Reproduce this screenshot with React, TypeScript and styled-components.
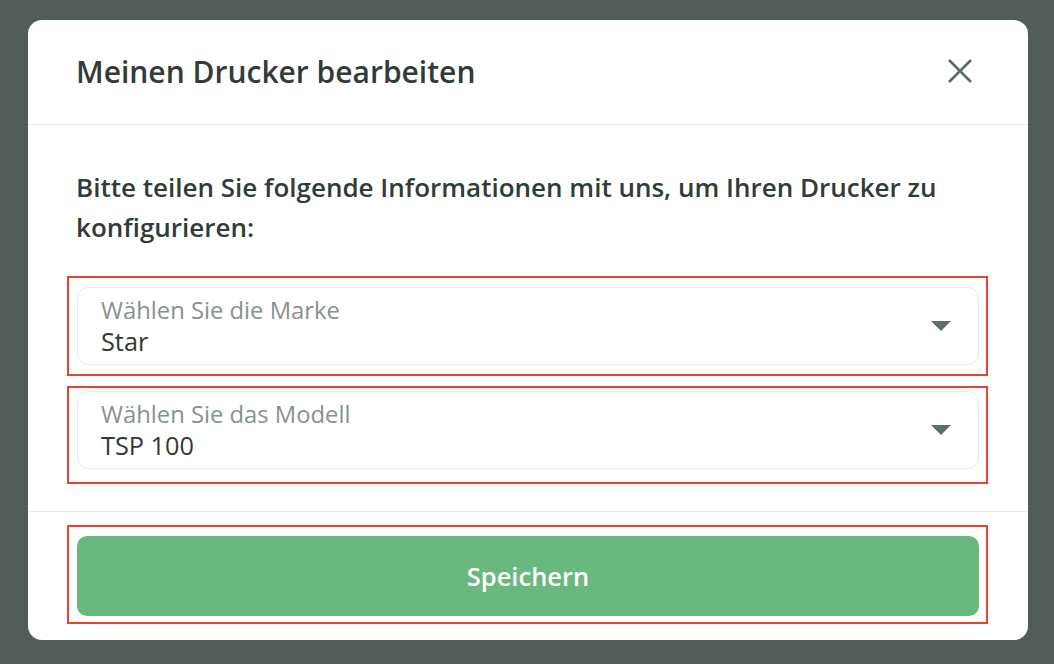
import React from "react";
import styled, { createGlobalStyle } from "styled-components";

const GlobalStyle = createGlobalStyle`
  html, body {
    margin: 0;
    padding: 0;
    background: #525b57;
    font-family: "Open Sans", "Noto Sans", sans-serif;
  }
  * { box-sizing: border-box; }
`;

const Backdrop = styled.div`
  width: 1054px;
  height: 664px;
  padding: 20px 26px 24px 28px;
  background: #525b57;
`;

const Modal = styled.div`
  width: 1000px;
  height: 620px;
  background: #ffffff;
  border-radius: 14px;
  display: flex;
  flex-direction: column;
  overflow: hidden;
`;

const Header = styled.div`
  height: 105px;
  display: flex;
  align-items: center;
  justify-content: space-between;
  padding: 0 52px 2px 48px;
  border-bottom: 1px solid #ebebeb;
`;

const Title = styled.h1`
  margin: 0;
  font-size: 30px;
  font-weight: 600;
  color: #313c39;
`;

const CloseButton = styled.button`
  border: 0;
  background: transparent;
  padding: 0;
  width: 32px;
  height: 32px;
  display: flex;
  align-items: center;
  justify-content: center;
  cursor: pointer;
`;

const Body = styled.div`
  flex: 1;
  padding: 42px 48px 0 48px;
  display: flex;
  flex-direction: column;
  border-bottom: 1px solid #ebebeb;
`;

const Intro = styled.p`
  margin: 0 0 29px 0;
  font-size: 26px;
  line-height: 40px;
  font-weight: 600;
  color: #313c39;
`;

const Highlight = styled.div<{ $top: number; $bottom: number; $mb?: number }>`
  border: 2px solid #e8432c;
  margin: 0 -8px ${(p) => p.$mb ?? 0}px -9px;
  padding: ${(p) => p.$top}px 7px ${(p) => p.$bottom}px 8px;
`;

const Select = styled.div`
  height: 78px;
  border: 1.5px solid #ececec;
  border-radius: 11px;
  display: flex;
  align-items: center;
  justify-content: space-between;
  padding: 0 27px 0 23px;
`;

const SelectText = styled.div`
  display: flex;
  flex-direction: column;
`;

const SelectLabel = styled.span`
  font-size: 23.8px;
  line-height: 30px;
  color: #88928f;
`;

const SelectValue = styled.span`
  font-size: 25.3px;
  line-height: 32px;
  color: #2f3936;
`;

const Footer = styled.div`
  padding: 13px 48px 16px 48px;
`;

const SaveButton = styled.button`
  display: block;
  width: 100%;
  height: 80px;
  border: 0;
  border-radius: 10px;
  background: #69b87e;
  color: #ffffff;
  font-family: "Open Sans", "Noto Sans", sans-serif;
  font-size: 25.5px;
  font-weight: 600;
  cursor: pointer;
`;

const Caret = () => (
  <svg width="20" height="10" viewBox="0 0 20 10">
    <polygon points="0,0 20,0 10,10" fill="#5f6d68" />
  </svg>
);

const CloseIcon = () => (
  <svg width="24" height="24" viewBox="0 0 24 24">
    <path d="M1 1 L23 23 M23 1 L1 23" stroke="#5d6a66" strokeWidth="2.6" fill="none" />
  </svg>
);

export default function App() {
  return (
    <>
      <GlobalStyle />
      <Backdrop>
        <Modal>
          <Header>
            <Title>Meinen Drucker bearbeiten</Title>
            <CloseButton aria-label="Schließen">
              <CloseIcon />
            </CloseButton>
          </Header>
          <Body>
            <Intro>
              Bitte teilen Sie folgende Informationen mit uns, um Ihren Drucker zu konfigurieren:
            </Intro>
            <Highlight $top={9} $bottom={9} $mb={10}>
              <Select>
                <SelectText>
                  <SelectLabel>Wählen Sie die Marke</SelectLabel>
                  <SelectValue>Star</SelectValue>
                </SelectText>
                <Caret />
              </Select>
            </Highlight>
            <Highlight $top={3} $bottom={13}>
              <Select>
                <SelectText>
                  <SelectLabel>Wählen Sie das Modell</SelectLabel>
                  <SelectValue>TSP 100</SelectValue>
                </SelectText>
                <Caret />
              </Select>
            </Highlight>
          </Body>
          <Footer>
            <Highlight $top={9} $bottom={6}>
              <SaveButton>Speichern</SaveButton>
            </Highlight>
          </Footer>
        </Modal>
      </Backdrop>
    </>
  );
}
